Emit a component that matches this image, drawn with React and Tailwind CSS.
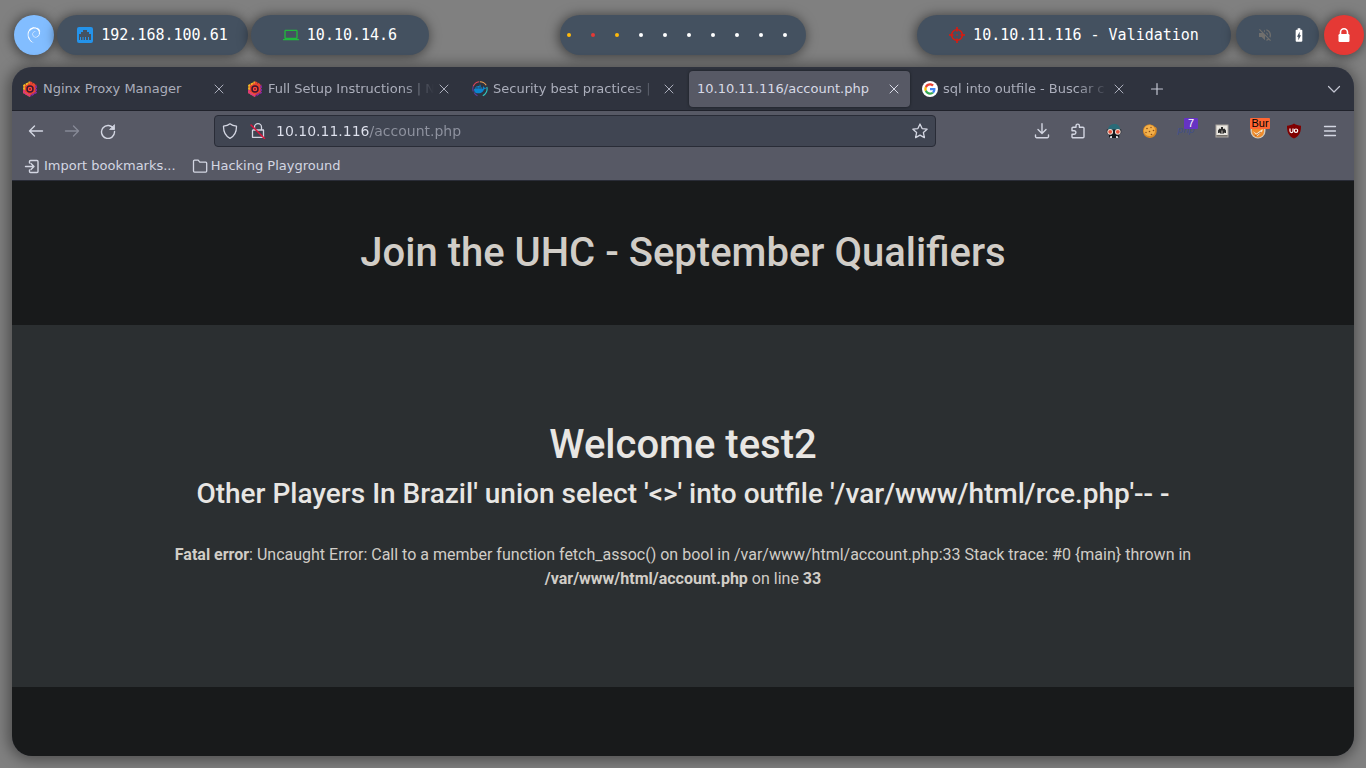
import React from "react";
import { SiDebian, SiDocker } from "react-icons/si";
import { MdLaptop, MdVolumeOff, MdBatteryChargingFull } from "react-icons/md";

const pill = "flex h-10 items-center justify-center rounded-[20px] bg-[#445160] shadow-[-1px_1px_12px_1px_rgba(0,0,0,0.5)]";

function EthernetIcon() {
  return (
    <svg viewBox="0 0 16 16" className="size-4 shrink-0">
      <rect width="16" height="16" rx="2" fill="#2493ea" />
      <path d="M2 13V7h2V5h2V3h4v2h2v2h2v6h-2v-3h-1v3H9v-3H8v3H6.5v-3h-1v3H4v-3H3v3z" fill="#445160" />
    </svg>
  );
}

function CrosshairIcon() {
  return (
    <svg viewBox="0 0 16 16" className="size-4 shrink-0" fill="none" stroke="#e0180c">
      <circle cx="8" cy="8" r="5.4" strokeWidth="1.4" />
      <path d="M8 0v4.500M8 11.500V16M0 8h4.500M11.500 8H16" strokeWidth="1.500" />
      <circle cx="8" cy="8" r="0.8" fill="#e0180c" stroke="none" />
    </svg>
  );
}

function LockIcon() {
  return (
    <svg viewBox="0 0 16 16" className="size-4 shrink-0">
      <path d="M4.500 8V5.200a3.500 3.500 0 0 1 7 0V8" fill="none" stroke="#fff" strokeWidth="1.600" />
      <rect x="2.500" y="7" width="11" height="8" rx="1.200" fill="#fff" />
    </svg>
  );
}

const dots = ["bg-[#ffb90a]", "bg-[#e53935]", "bg-[#ffb90a]", "bg-white", "bg-white", "bg-white", "bg-white", "bg-white", "bg-white", "bg-white"];

function StatusBar() {
  return (
    <header className="grid grid-cols-[1fr_auto_1fr] pt-[15px] font-['DejaVu_Sans_Mono',monospace] text-[15px] text-white">
      <div className="flex gap-[3px] pl-3.5">
        <button aria-label="Menu" className="flex size-10 items-center justify-center rounded-full bg-[#82bdff] shadow-[-1px_1px_12px_1px_rgba(0,0,0,0.5)]">
          <SiDebian className="size-4" />
        </button>
        <div className={pill + " w-[191px] gap-2"}>
          <EthernetIcon />
          <span>192.168.100.61</span>
        </div>
        <div className={pill + " w-[178px] gap-2"}>
          <MdLaptop className="size-4 text-[#20b83c]" />
          <span>10.10.14.6</span>
        </div>
      </div>
      <nav aria-label="Workspaces" className={pill + " w-[246px] !justify-start gap-5 pl-[7px]"}>
        {dots.map((color, i) => (
          <button key={i} aria-label={`Workspace ${i + 1}`} className={"size-1 rounded-full " + color} />
        ))}
      </nav>
      <div className="flex justify-end gap-[5px] pr-0.5">
        <div className={pill + " w-[314px] gap-2"}>
          <CrosshairIcon />
          <span>10.10.11.116 - Validation</span>
        </div>
        <div className={pill + " w-[83px] gap-[18px] pl-2"}>
          <MdVolumeOff className="size-4 text-[#706f6d]" />
          <MdBatteryChargingFull className="size-4" />
        </div>
        <button aria-label="Lock screen" className="flex size-10 items-center justify-center rounded-full bg-[#e53935] shadow-[-1px_1px_12px_1px_rgba(0,0,0,0.5)]">
          <LockIcon />
        </button>
      </div>
    </header>
  );
}

function NginxIcon() {
  return (
    <svg viewBox="0 0 16 16" className="size-4 shrink-0">
      <path d="M8 1l6 3.500v7L8 15l-6-3.500v-7z" fill="#e8432f" />
      <path d="M8 15l-6-3.500v-7L8 1" fill="none" stroke="#f6b824" strokeWidth="1.800" strokeDasharray="2.600 .6" />
      <path d="M8 1l6 3.500" fill="none" stroke="#e8462f" strokeWidth="1.800" strokeDasharray="2.600 .6" />
      <path d="M14 4.500v7L8 15" fill="none" stroke="#8a2a9c" strokeWidth="1.800" strokeDasharray="2.600 .6" />
      <path d="M8 15l-6-3.500V9" fill="none" stroke="#e0347a" strokeWidth="1.800" />
      <circle cx="8" cy="8" r="3" fill="#ff4a3a" stroke="#3a1630" strokeWidth="1.500" />
      <circle cx="8" cy="8" r="1" fill="#7d1d34" />
    </svg>
  );
}

function DockerIcon() {
  return (
    <span className="relative flex size-4 shrink-0 items-center justify-center">
      <svg viewBox="0 0 16 16" className="absolute inset-0" fill="none" strokeWidth="1.100">
        <path d="M1.300 10.500A7.300 7.300 0 0 1 1.300 5.200" stroke="#5b3fa0" />
        <path d="M1.300 5.200A7.300 7.300 0 0 1 7 .8" stroke="#e0475b" />
        <path d="M7.800.7a7.300 7.300 0 0 1 6.400 3.600" stroke="#f2a154" />
        <path d="M14.800 6a7.300 7.300 0 0 1-4 8.700" stroke="#2fc6c0" />
        <path d="M2 11.500a7.300 7.300 0 0 0 3.500 3.200" stroke="#5b3fa0" />
      </svg>
      <SiDocker className="size-3 text-[#0a85cf]" />
    </span>
  );
}

function GoogleIcon() {
  return (
    <svg viewBox="0 0 16 16" className="size-4 shrink-0">
      <circle cx="8" cy="8" r="8" fill="#fff" />
      <g transform="translate(2.3 2.3) scale(.2375)">
        <path fill="#EA4335" d="M24 9.5c3.54 0 6.71 1.22 9.21 3.6l6.85-6.85C35.9 2.38 30.47 0 24 0 14.62 0 6.51 5.38 2.56 13.22l7.98 6.19C12.43 13.72 17.74 9.5 24 9.5z" />
        <path fill="#4285F4" d="M46.98 24.55c0-1.57-.15-3.09-.38-4.55H24v9.02h12.94c-.58 2.96-2.26 5.48-4.78 7.18l7.73 6c4.51-4.18 7.09-10.36 7.09-17.65z" />
        <path fill="#FBBC05" d="M10.53 28.59A14.4 14.4 0 0 1 9.77 24c0-1.6.27-3.14.76-4.59l-7.98-6.19A23.9 23.9 0 0 0 0 24c0 3.88.92 7.54 2.56 10.78l7.97-6.19z" />
        <path fill="#34A853" d="M24 48c6.48 0 11.93-2.13 15.89-5.81l-7.73-6c-2.15 1.45-4.92 2.3-8.16 2.3-6.26 0-11.57-4.22-13.47-9.91l-7.98 6.19C6.51 42.62 14.62 48 24 48z" />
      </g>
    </svg>
  );
}

function Glyph({ children, className = "" }) {
  return (
    <svg viewBox="0 0 16 16" className={"size-4 shrink-0 " + className} fill="none" stroke="currentColor" strokeWidth="1.2" strokeLinecap="round" strokeLinejoin="round">
      {children}
    </svg>
  );
}

const tabs = [
  { title: "Nginx Proxy Manager", icon: <NginxIcon /> },
  { title: "Full Setup Instructions | N", icon: <NginxIcon />, fade: true },
  { title: "Security best practices |", icon: <DockerIcon />, fade: true },
  { title: "10.10.11.116/account.php", active: true },
  { title: "sql into outfile - Buscar c", icon: <GoogleIcon />, fade: true },
];

function Tab({ title, icon, active, fade }) {
  return (
    <div
      className={
        "flex h-9 w-[221px] min-w-0 items-center rounded pl-2 pr-2 " +
        (active ? "bg-[#575965] text-[#d8dae6] shadow-[0_0_3px_rgba(0,0,0,0.5)]" : "text-[#abaebb]")
      }
    >
      <button role="tab" aria-selected={!!active} className="flex h-full min-w-0 flex-1 items-center gap-[5px] text-left">
        {icon}
        <span
          className={
            "min-w-0 flex-1 overflow-hidden whitespace-nowrap " +
            (fade ? "[mask-image:linear-gradient(to_left,transparent_2px,black_34px)]" : "")
          }
        >
          {title}
        </span>
      </button>
      <button aria-label="Close tab" className="flex size-4 shrink-0 items-center justify-center">
        <Glyph><path d="M4 4l8 8M12 4l-8 8" strokeWidth="1" /></Glyph>
      </button>
    </div>
  );
}

function TabStrip() {
  return (
    <div className="flex h-11 items-center border-b border-[#20222b] bg-[#2f333e] px-0.5 text-[#c3c6d2]">
      <div role="tablist" className="flex min-w-0 gap-1">
        {tabs.map((t) => <Tab key={t.title} {...t} />)}
      </div>
      <button aria-label="New tab" className="ml-1 flex size-9 items-center justify-center">
        <Glyph><path d="M8 2.500v11M2.500 8h11" /></Glyph>
      </button>
      <button aria-label="List all tabs" className="ml-auto flex size-9 items-center justify-center">
        <Glyph><path d="M2.500 5.500L8 11l5.500-5.500" /></Glyph>
      </button>
    </div>
  );
}

function ToolButton({ label, children, className = "" }) {
  return (
    <button aria-label={label} className={"relative flex h-8 w-9 shrink-0 items-center justify-center " + className}>
      {children}
    </button>
  );
}

function SpyIcon() {
  return (
    <svg viewBox="0 0 16 16" className="size-4">
      <path d="M1.800 8C1.800 3.500 4.500 1 8.500 1c3.800 0 5.800 2.500 5.800 7z" fill="#2a6b78" />
      <path d="M.8 6.500h14.400v3.500l-2 2V15H3v-3L.8 10z" fill="#14181d" />
      <circle cx="4.200" cy="8.800" r="2.900" fill="#e9ddd5" />
      <circle cx="11.800" cy="8.800" r="2.900" fill="#e9ddd5" />
      <circle cx="4.200" cy="8.800" r="1.900" fill="#e5533d" />
      <circle cx="11.800" cy="8.800" r="1.900" fill="#e5533d" />
      <path d="M3.500 15l1-2h1.500v2zM12.500 15l-1-2H10v2z" fill="#d5d8dc" />
    </svg>
  );
}

function CookieIcon() {
  return (
    <svg viewBox="0 0 16 16" className="size-4">
      <path d="M8 1.200c1 0 1.500.800 2.500.900.800.200 1.200 1.400 2.200 1.700.900.300 2 .700 2 2.200v2.500A6.900 6.900 0 1 1 8 1.200z" fill="#d98a24" />
      <circle cx="7.500" cy="7.500" r="5.600" fill="#f3b04a" />
      <g fill="#8a4b16">
        <circle cx="5" cy="5.500" r=".8" /><circle cx="9" cy="4.500" r=".7" /><circle cx="11.500" cy="7.500" r=".8" />
        <circle cx="7.500" cy="8.500" r=".8" /><circle cx="4" cy="9.500" r=".7" /><circle cx="9.500" cy="11.500" r=".8" />
      </g>
    </svg>
  );
}

function PixelIcon() {
  return (
    <svg viewBox="0 0 16 16" className="size-4">
      <rect x="1.500" y="1.500" width="13" height="13" fill="#aaa59f" />
      <rect x="2.500" y="2.500" width="11" height="9.500" fill="#e9e6e0" />
      <path d="M4 7.500l1.500-2 1.500.5V4h2v2l1.500-.5 1.500 2V10h-1.500l-.5-1v1.500H6V9l-.5 1H4z" fill="#2b2b2b" />
      <path d="M7.200 7.500h1.600V10H7.200z" fill="#8f8a84" />
      <rect x="2.500" y="12" width="11" height="1.500" fill="#75706b" />
    </svg>
  );
}

function FoxIcon() {
  return (
    <svg viewBox="0 0 16 16" className="size-4">
      <path d="M0.500 3.500h15V8a7.500 7.500 0 0 1-15 0z" fill="#d5c9b5" />
      <path d="M2 5h12v3.500a6 6 0 0 1-12 0z" fill="#ef8b2a" />
      <path d="M2.500 8l4 2.500 6-4.500v2l-5 5z" fill="#f8ead3" />
      <path d="M5 13l6-4" stroke="#a7551b" strokeWidth=".8" />
    </svg>
  );
}

const badge = "absolute top-[3px] flex h-[11px] items-center justify-center rounded-[1px] font-['Liberation_Sans',sans-serif] text-[11px] leading-none";

function NavBar() {
  return (
    <div className="flex h-10 items-center px-1.5 text-[#d3d6e2]">
      <ToolButton label="Back"><Glyph><path d="M14.500 8h-13M6.500 3L1.500 8l5 5" strokeWidth="1.400" /></Glyph></ToolButton>
      <ToolButton label="Forward" className="text-[#878996]"><Glyph><path d="M1.500 8h13M9.500 3l5 5-5 5" strokeWidth="1.400" /></Glyph></ToolButton>
      <ToolButton label="Reload">
        <Glyph><path d="M13.800 6A6.500 6.500 0 1 0 14.500 8.500" strokeWidth="1.400" /><path d="M14.500 2v4.500H10z" fill="currentColor" strokeWidth=".8" /></Glyph>
      </ToolButton>
      <div className="mx-22 flex h-8 min-w-0 flex-1 items-center rounded border border-[#292c37] bg-[#404552] px-[7px]">
        <Glyph><path d="M8 .8c2 1.600 4 2.100 6.500 2.400C14.600 9 13 13 8 15.300 3 13 1.400 9 1.500 3.200 4 2.900 6 2.400 8 .800z" strokeWidth="1.300" /></Glyph>
        <Glyph className="ml-3">
          <path d="M4.500 7V4.200a3.500 3.500 0 0 1 7 0V7M3 7h10.500v7.300H2.500V7.500z" strokeWidth="1.300" />
          <path d="M1 2l13.500 13.500" stroke="#e0143c" strokeWidth="1.500" />
        </Glyph>
        <input
          aria-label="Address"
          defaultValue="10.10.11.116/account.php"
          className="ml-2.5 h-6 min-w-0 flex-1 bg-[linear-gradient(90deg,#dfe2ee_94px,#8f93a0_94px)] bg-clip-text text-sm text-transparent caret-white outline-none"
        />
        <button aria-label="Bookmark this page">
          <Glyph><path d="M8 1l2.100 4.600 5 .6-3.700 3.400 1 5L8 12.100l-4.400 2.500 1-5L.900 6.200l5-.6z" strokeWidth="1.300" /></Glyph>
        </button>
      </div>
      <ToolButton label="Downloads"><Glyph><path d="M8 .8v9.500M4 6.500l4 4 4-4M1.500 12v1.500a1.200 1.200 0 0 0 1.200 1.200h10.600a1.200 1.200 0 0 0 1.200-1.200V12" strokeWidth="1.400" /></Glyph></ToolButton>
      <ToolButton label="Extensions"><Glyph><path d="M2 5.200a1 1 0 0 1 1-1h3V2.800a1.700 1.700 0 0 1 3.400 0v1.400H13a1 1 0 0 1 1 1v8.600a1 1 0 0 1-1 1H3a1 1 0 0 1-1-1v-2.600h2.200a1.700 1.700 0 0 0 0-3.400H2z" strokeWidth="1.400" /></Glyph></ToolButton>
      <ToolButton label="Incognito agent"><SpyIcon /></ToolButton>
      <ToolButton label="Cookie editor"><CookieIcon /></ToolButton>
      <ToolButton label="Technology profiler">
        <span className="text-[9px] italic text-[#404e8c]">php</span>
        <span className={badge + " left-4 w-3.5 bg-[#6633c4] text-white"}>7</span>
      </ToolButton>
      <ToolButton label="Image tools"><PixelIcon /></ToolButton>
      <ToolButton label="Proxy switcher">
        <FoxIcon />
        <span className={badge + " left-2.5 w-5 bg-[#ff6633] text-black"}>Bur</span>
      </ToolButton>
      <ToolButton label="uBlock Origin">
        <svg viewBox="0 0 16 16" className="size-4">
          <path d="M8 .5c2 1.500 4.500 2 7 2.200 0 6-1 9.800-7 12.800-6-3-7-6.800-7-12.800C3.500 2.500 6 2 8 .5z" fill="#800000" />
          <path d="M4 5.500v2.600a1.500 1.500 0 0 0 3 0V5.500" fill="none" stroke="#fff" strokeWidth="1.200" />
          <circle cx="10" cy="7.700" r="1.700" fill="none" stroke="#fff" strokeWidth="1.200" />
        </svg>
      </ToolButton>
      <ToolButton label="Application menu"><Glyph><path d="M2.500 3.500h11M2.500 8h11M2.500 12.500h11" strokeWidth="1.300" /></Glyph></ToolButton>
    </div>
  );
}

function BookmarksBar() {
  return (
    <div className="flex h-[30px] items-center gap-4 border-b border-[#292c37] pl-3 text-[#d3d6e2]">
      <button className="flex items-center gap-1">
        <Glyph><path d="M5.500 5V3.500a1 1 0 0 1 1-1H13a1 1 0 0 1 1 1v10a1 1 0 0 1-1 1H6.500a1 1 0 0 1-1-1V12M1.500 8.500h8M7 5.500l3 3-3 3" strokeWidth="1.400" /></Glyph>
        Import bookmarks...
      </button>
      <button className="flex items-center gap-[3px]">
        <Glyph><path d="M1.500 3.200a1 1 0 0 1 1-1h3.700l1.600 2h5.900a1 1 0 0 1 1 1v7.900a1 1 0 0 1-1 1H2.500a1 1 0 0 1-1-1z" strokeWidth="1.300" /></Glyph>
        Hacking Playground
      </button>
    </div>
  );
}

function Page() {
  return (
    <main className="flex-1 bg-[#181a1b] text-center font-[Roboto,sans-serif] text-base text-[#d1cdc7]">
      <section className="px-4 py-12">
        <h1 className="text-[40px] font-medium leading-12">Join the UHC - September Qualifiers</h1>
      </section>
      <section className="bg-[#2b2f31] px-4 py-24">
        <div className="mx-auto max-w-[1110px]">
          <h1 className="text-[40px] font-medium leading-12 text-[#e8e6e3]">Welcome test2</h1>
          <h3 className="mt-2 text-[28px] font-medium leading-[34px] text-[#e8e6e3]">
            Other Players In Brazil' union select '&lt;&gt;' into outfile '/var/www/html/rce.php'-- -
          </h3>
          <p className="mt-8 leading-6">
            <b>Fatal error</b>: Uncaught Error: Call to a member function fetch_assoc() on bool in /var/www/html/account.php:33 Stack trace: #0 {"{main}"} thrown in <b>/var/www/html/account.php</b> on line <b>33</b>
          </p>
        </div>
      </section>
    </main>
  );
}

export default function App() {
  return (
    <div className="flex min-h-screen flex-col bg-[#808080]">
      <StatusBar />
      <div className="m-3 flex flex-1 flex-col overflow-hidden rounded-[20px] bg-[#575965] font-['DejaVu_Sans',sans-serif] text-[13px] shadow-[-1px_1px_14px_3px_rgba(0,0,0,0.4)]">
        <TabStrip />
        <NavBar />
        <BookmarksBar />
        <Page />
      </div>
    </div>
  );
}
